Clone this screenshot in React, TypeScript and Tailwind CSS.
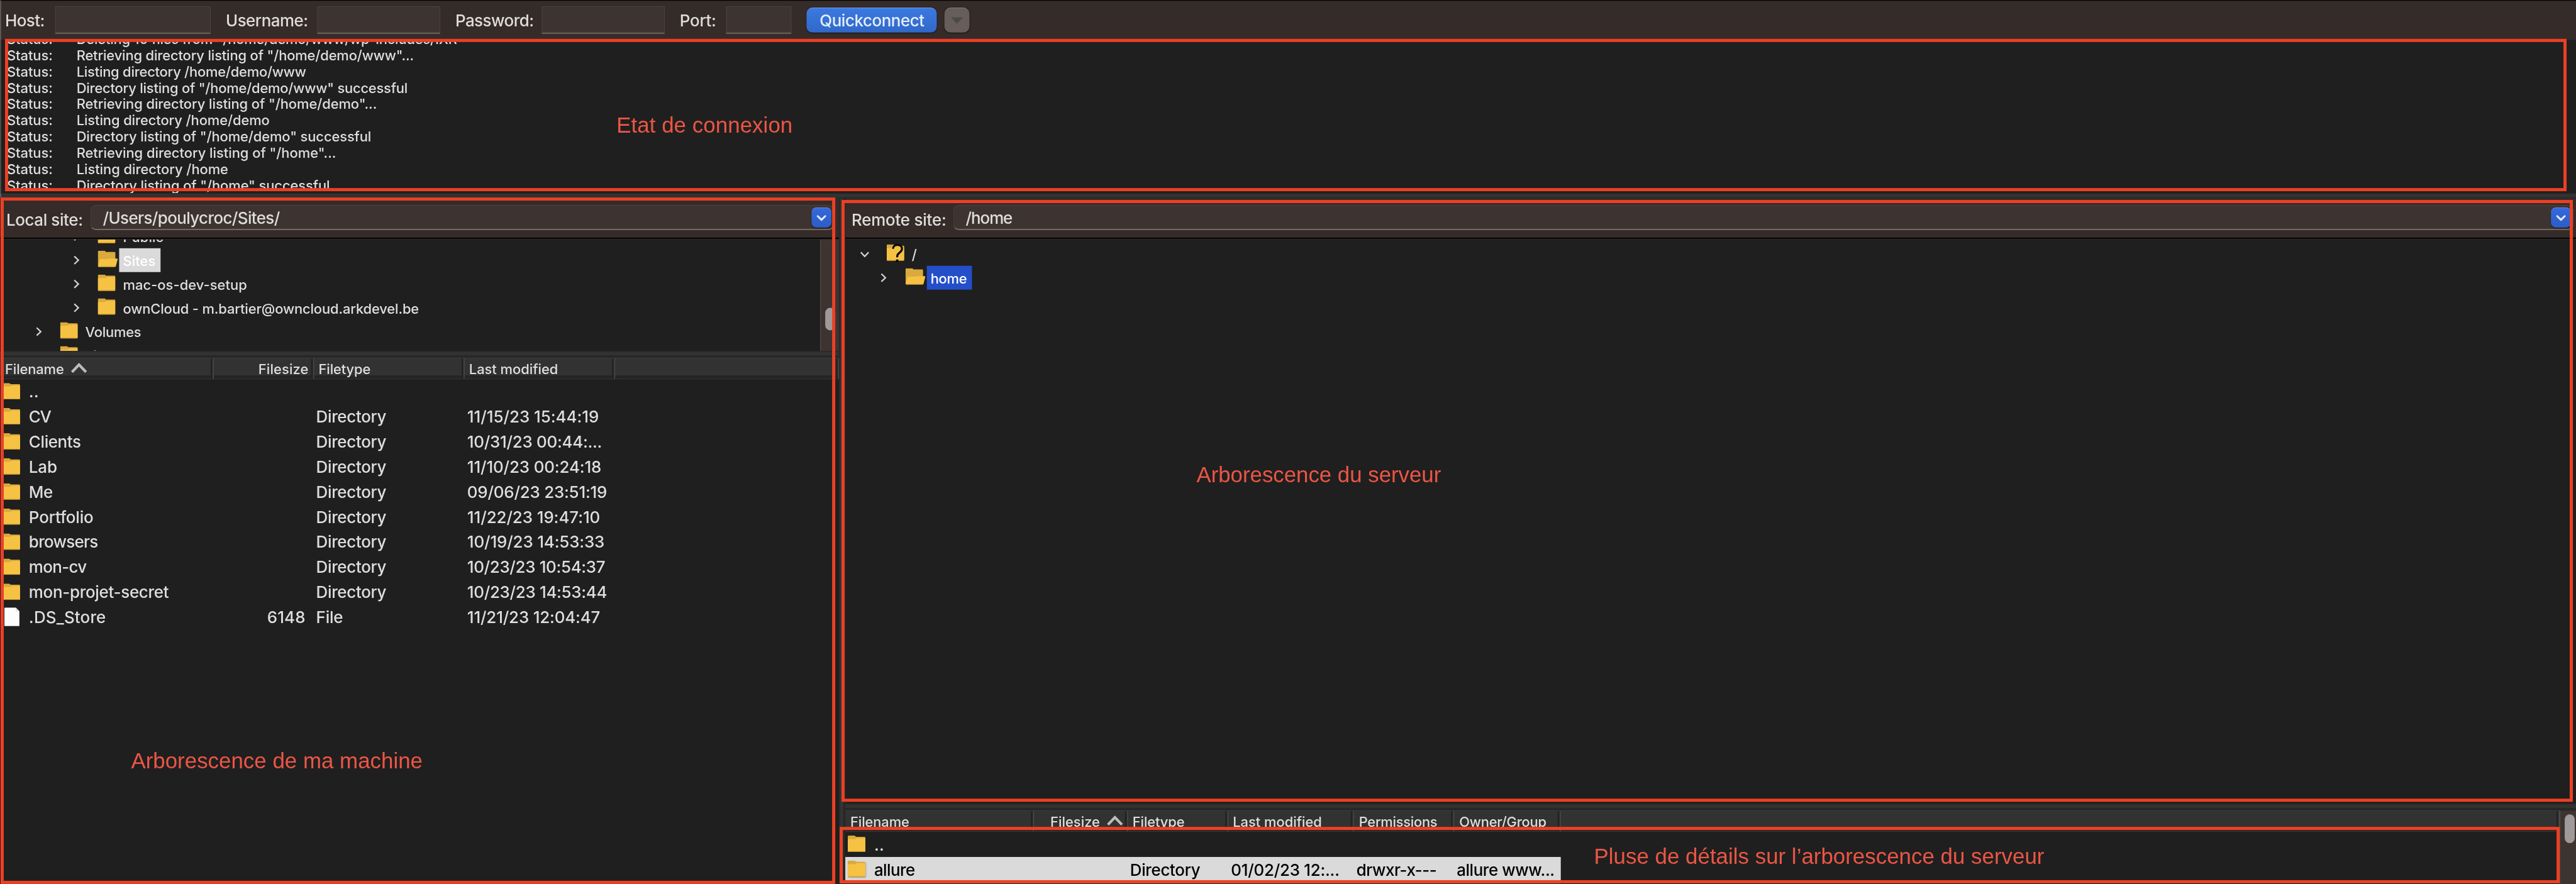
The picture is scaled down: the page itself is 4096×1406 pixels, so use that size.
import React, { useLayoutEffect, useRef, useState } from "react";

const SCALE = 4096 / 4108;

/** Text whose tracking is tuned so that it occupies an exact advance width. */
function Fit({ w, className = "", children }: { w: number; className?: string; children: string }) {
  const ref = useRef<HTMLSpanElement>(null);
  const [spacing, setSpacing] = useState(0);
  useLayoutEffect(() => {
    if (!ref.current) return;
    const natural = ref.current.getBoundingClientRect().width / SCALE;
    setSpacing((w - natural) / children.length);
  }, []);
  return (
    <span
      ref={ref}
      className={`inline-block shrink-0 pl-[1px] whitespace-pre ${className}`}
      style={{ letterSpacing: `${spacing}px` }}
    >
      {children}
    </span>
  );
}

function Folder({ className = "" }: { className?: string }) {
  return (
    <svg viewBox="0 0 28 26" className={`h-[26px] w-[28px] shrink-0 ${className}`}>
      <path d="M0 1.5Q0 0 1.5 0H10.5Q12 0 12.7 1.8H26.5Q28 1.8 28 3.3V24.5Q28 26 26.5 26H1.5Q0 26 0 24.5Z" fill="#dba93c" />
      <path d="M0 6.6Q0 5.6 1 5.6H11.5Q12.6 5.6 13.4 4.6T15.5 3.8H27Q28 3.8 28 4.8V24.5Q28 25.8 26.5 25.8H1.5Q0 25.8 0 24.5Z" fill="#f6c244" />
      <path d="M0.6 25.4H27.4" stroke="#c4962f" strokeWidth="1" />
    </svg>
  );
}

function OpenFolder({ className = "" }: { className?: string }) {
  return (
    <svg viewBox="0 0 32 26" className={`h-[26px] w-[32px] shrink-0 ${className}`}>
      <path d="M0 1.5Q0 0 1.5 0H10.5Q12 0 12.7 1.8H26.5Q28 1.8 28 3.3V24.5H0Z" fill="#dba93c" />
      <path d="M3.4 14.3Q3.7 13.2 4.8 13.2H14.5Q16 13 16.8 12.5H30.6Q31.9 12.5 31.6 13.6L28.8 24.6Q28.4 26 27 26H1.6Q0 26 0.3 24.4Z" fill="#f6c244" />
      <path d="M1 25.5H27.6" stroke="#c4962f" strokeWidth="1" />
    </svg>
  );
}

function UnknownFolder() {
  return (
    <span className="relative mt-[4px] block h-[26px] w-[28px] shrink-0">
      <Folder />
      <svg viewBox="0 0 20 32" className="absolute -top-[2px] left-[8px] h-[32px] w-[20px]">
        <path d="M2.2 8.8C2.2 5 4.8 2.6 9.2 2.6C13.6 2.6 16.4 5 16.4 8.8C16.4 11.4 15.2 13 12.8 14.8C10 16.8 8.8 18 8.8 20.8V22.4" fill="none" stroke="#0a0a0a" strokeWidth="3.2" />
        <circle cx="8.8" cy="28" r="2.3" fill="#0a0a0a" />
      </svg>
    </span>
  );
}

function FileIcon({ className = "" }: { className?: string }) {
  return (
    <svg viewBox="0 0 24 30" className={`h-[30px] w-[24px] shrink-0 ${className}`}>
      <path d="M0 1.5Q0 0 1.5 0H18L24 6V28.5Q24 30 22.5 30H1.5Q0 30 0 28.5Z" fill="#fdfdfd" />
      <path d="M18 0L24 6H20Q18 6 18 4Z" fill="#e2e2e2" />
      <path d="M0.5 29.5H23.5" stroke="#b8b8b8" strokeWidth="1" />
    </svg>
  );
}

function ChevronRight({ className = "" }: { className?: string }) {
  return (
    <svg viewBox="0 0 10 16" className={`h-[16px] w-[10px] shrink-0 ${className}`}>
      <path d="M1.5 1.8L8 8L1.5 14.2" fill="none" stroke="#d2d2d2" strokeWidth="2.3" />
    </svg>
  );
}

function ChevronDown({ className = "" }: { className?: string }) {
  return (
    <svg viewBox="0 0 16 10" className={`h-[10px] w-[16px] shrink-0 ${className}`}>
      <path d="M1.8 1.5L8 8L14.2 1.5" fill="none" stroke="#d2d2d2" strokeWidth="2.3" />
    </svg>
  );
}

function SortCaret({ className = "" }: { className?: string }) {
  return (
    <svg viewBox="0 0 26 16" className={`h-[16px] w-[26px] shrink-0 ${className}`}>
      <path d="M1.8 14.5L13 2.8L24.2 14.5" fill="none" stroke="#bcbcbc" strokeWidth="4.2" />
    </svg>
  );
}

function Field({ className = "" }: { className?: string }) {
  return (
    <div className={`h-[44px] shrink-0 border border-b-2 border-[#4c4341] border-b-[#6d6462] bg-[#3d3431] ${className}`} />
  );
}

function ConnectBar() {
  return (
    <header className="flex h-[64px] border-t border-black bg-[#352b29] text-[26px] text-[#dfdcdb]">
      <div className="flex h-full w-full items-start border-t border-[#2a2524] pt-[8px]">
        <Fit w={64} className="ml-[7px] leading-[45px]">Host:</Fit>
        <Field className="ml-[17px] w-[248px]" />
        <Fit w={132} className="ml-[23px] leading-[45px]">Username:</Fit>
        <Field className="ml-[15px] w-[196px]" />
        <Fit w={126} className="ml-[23px] leading-[45px]">Password:</Fit>
        <Field className="ml-[13px] w-[196px]" />
        <Fit w={59} className="ml-[23px] leading-[45px]">Port:</Fit>
        <Field className="ml-[16px] w-[104px]" />
        <button className="mt-[2px] ml-[24px] h-[40px] w-[208px] rounded-[10px] border-t border-[#6d9ceb] bg-linear-to-b from-[#3b79e0] to-[#3068c8] text-center text-[#e6eefb] shadow-[0_1px_2px_rgba(0,0,0,0.5)]">
          <Fit w={168} className="leading-[37px]">Quickconnect</Fit>
        </button>
        <button className="mt-[2px] ml-[12px] flex h-[40px] w-[40px] justify-center rounded-[10px] border-t border-[#857b79] bg-[#675d5b] pt-[14px] shadow-[0_1px_2px_rgba(0,0,0,0.5)]">
          <svg viewBox="0 0 20 11" className="h-[11px] w-[20px]">
            <path d="M0.5 0.5H19.5L10 10.8Z" fill="#4b4a47" />
          </svg>
        </button>
      </div>
    </header>
  );
}

const LOG: [string, number][] = [
  ['Deleting 10 files from "/home/demo/www/wp-includes/IXR', 608],
  ['Retrieving directory listing of "/home/demo/www"...', 539],
  ["Listing directory /home/demo/www", 367],
  ['Directory listing of "/home/demo/www" successful', 529],
  ['Retrieving directory listing of "/home/demo"...', 480],
  ["Listing directory /home/demo", 309],
  ['Directory listing of "/home/demo" successful', 471],
  ['Retrieving directory listing of "/home"...', 415],
  ["Listing directory /home", 243],
  ['Directory listing of "/home" successful', 405],
];

function MessageLog() {
  return (
    <section className="h-[244px] shrink-0 overflow-hidden bg-[#1f1f1f] text-[22px] leading-[26px] text-[#dedede]">
      <div className="-mt-[15px]">
        {LOG.map(([text, w]) => (
          <div key={text} className="flex h-[26px]">
            <div className="w-[111px] pl-[10px]">
              <Fit w={74}>Status:</Fit>
            </div>
            <div className="pl-[10px]">
              <Fit w={w}>{text}</Fit>
            </div>
          </div>
        ))}
      </div>
    </section>
  );
}

function SiteBar({ label, labelWidth, path, pathWidth, labelPad, comboClass }: {
  label: string; labelWidth: number; path: string; pathWidth: number; labelPad: string; comboClass: string;
}) {
  return (
    <div className="flex h-[65px] shrink-0 border-b-2 border-black bg-[#352b29] text-[26px] text-[#dfdcdb]">
      <Fit w={labelWidth} className={`mt-[13px] leading-[43px] ${labelPad}`}>{label}</Fit>
      <div className={`mt-[11px] flex h-[40px] justify-between rounded-[9px] border border-b-2 border-[#4c4341] border-b-[#746a68] bg-[#3d3431] pr-[3px] ${comboClass}`}>
        <Fit w={pathWidth} className="ml-[18px] leading-[40px]">{path}</Fit>
        <span className="mt-[3px] flex h-[32px] w-[32px] items-center justify-center rounded-[8px] border-t border-[#6590ee] bg-linear-to-b from-[#3469dc] to-[#2c5cc6] shadow-[0_1px_2px_rgba(0,0,0,0.6)]">
          <svg viewBox="0 0 16 10" className="h-[10px] w-[16px]">
            <path d="M2 1.8L8 7.6L14 1.8" fill="none" stroke="#e4ebfa" strokeWidth="3" strokeLinecap="round" strokeLinejoin="round" />
          </svg>
        </span>
      </div>
    </div>
  );
}

function Splitter() {
  return <div className="h-[11px] shrink-0 border-t border-b-4 border-[#262626] border-b-[#272727] bg-[#323232]" />;
}

type Node = { name: string; w: number; indent: string; open?: boolean; arrow?: boolean };

const LOCAL_TREE: Node[] = [
  { name: "Public", w: 66, indent: "pl-[117px]", arrow: true },
  { name: "Sites", w: 53, indent: "pl-[117px]", open: true, arrow: true },
  { name: "mac-os-dev-setup", w: 199, indent: "pl-[117px]", arrow: true },
  { name: "ownCloud - m.bartier@owncloud.arkdevel.be", w: 473, indent: "pl-[117px]", arrow: true },
  { name: "Volumes", w: 90, indent: "pl-[57px]", arrow: true },
  { name: "bin", w: 31, indent: "pl-[57px]", arrow: false },
];

function LocalTree() {
  return (
    <div className="flex h-[179px] shrink-0 overflow-hidden border-t border-[#2b2b2b] bg-[#1f1f1f] text-[22px] text-[#dedede]">
      <div className="-mt-[24px] grow">
        {LOCAL_TREE.map((n) => (
          <div key={n.name} className={`flex h-[38px] ${n.indent}`}>
            <ChevronRight className={n.arrow ? "mt-[11px]" : "invisible mt-[11px]"} />
            {n.open ? <OpenFolder className="mt-[4px] ml-[29px]" /> : <Folder className="mt-[4px] mr-[4px] ml-[29px]" />}
            <span className={n.open ? "ml-[2px] w-[66px] bg-[#dadada] pl-[5px] text-white" : "ml-[2px] pl-[5px]"}>
              <Fit w={n.w} className="leading-[40px]">{n.name}</Fit>
            </span>
          </div>
        ))}
      </div>
      <div className="w-[30px] border-l border-[#574e4b] bg-[#3d3431] pt-[109px] pl-[7px]">
        <div className="h-[36px] w-[16px] rounded-full bg-[#a09999]" />
      </div>
    </div>
  );
}

function HeadCell({ label, w, width, align = "justify-start pl-[6px]", sort }: {
  label?: string; w?: number; width: string; align?: string; sort?: boolean;
}) {
  return (
    <div className={`flex h-full items-start border-r-2 border-[#464646] ${width}`}>
      <div className={`flex h-full min-w-0 grow ${align}`}>
        {label && <Fit w={w ?? 0} className="leading-[35px]">{label}</Fit>}
        {sort && <SortCaret className="mt-[7px] ml-[11px]" />}
      </div>
      <div className="-ml-[3px] h-full w-[3px] bg-[#232323]" />
    </div>
  );
}

function TableHead({ children }: { children: React.ReactNode }) {
  return (
    <div className="flex h-[34px] shrink-0 border-t border-b border-t-[#474747] border-b-[#3a3a3a] bg-linear-to-b from-[#323232] from-85% to-[#252525] to-85% text-[22px] text-[#dedede]">
      {children}
    </div>
  );
}

type FileRow = { name: string; w: number; size?: string; type?: string; tw?: number; date?: string; dw?: number };

const LOCAL_FILES: FileRow[] = [
  { name: "..", w: 17 },
  { name: "CV", w: 36, type: "Directory", date: "11/15/23 15:44:19", dw: 211 },
  { name: "Clients", w: 84, type: "Directory", date: "10/31/23 00:44:...", dw: 216 },
  { name: "Lab", w: 46, type: "Directory", date: "11/10/23 00:24:18", dw: 215 },
  { name: "Me", w: 39, type: "Directory", date: "09/06/23 23:51:19", dw: 224 },
  { name: "Portfolio", w: 104, type: "Directory", date: "11/22/23 19:47:10", dw: 213 },
  { name: "browsers", w: 111, type: "Directory", date: "10/19/23 14:53:33", dw: 220 },
  { name: "mon-cv", w: 93, type: "Directory", date: "10/23/23 10:54:37", dw: 221 },
  { name: "mon-projet-secret", w: 224, type: "Directory", date: "10/23/23 14:53:44", dw: 224 },
  { name: ".DS_Store", w: 124, size: "6148", type: "File", tw: 44, date: "11/21/23 12:04:47", dw: 213 },
];

function LocalPanel() {
  return (
    <section className="flex w-[1338px] shrink-0 flex-col bg-[#1f1f1f]">
      <SiteBar label="Local site:" labelWidth={123} labelPad="ml-[9px]" path="/Users/poulycroc/Sites/" pathWidth={283} comboClass="ml-[12px] w-[1186px]" />
      <LocalTree />
      <Splitter />
      <TableHead>
        <HeadCell label="Filename" w={95} width="w-[341px]" align="pl-[7px]" sort />
        <HeadCell label="Filesize" w={81} width="w-[160px]" align="justify-end pr-[7px]" />
        <HeadCell label="Filetype" w={84} width="w-[240px]" />
        <HeadCell label="Last modified" w={143} width="w-[240px]" />
        <HeadCell width="w-[357px]" />
      </TableHead>
      <div className="text-[26px] leading-[40px] text-[#dedede]">
        {LOCAL_FILES.map((f) => (
          <div key={f.name} className="flex h-[40px]">
            <div className="flex w-[341px] pl-[4px]">
              {f.size ? <FileIcon className="mt-[4px] mr-px ml-[3px]" /> : <Folder className="mt-[6px]" />}
              <Fit w={f.w} className="ml-[13px]">{f.name}</Fit>
            </div>
            <div className="flex w-[160px] justify-end pr-[14px]">
              {f.size && <Fit w={62}>{f.size}</Fit>}
            </div>
            <div className="w-[240px] pl-[2px]">{f.type && <Fit w={f.tw ?? 113}>{f.type}</Fit>}</div>
            <div className="w-[240px] pl-[3px]">{f.date && <Fit w={f.dw ?? 0}>{f.date}</Fit>}</div>
          </div>
        ))}
      </div>
    </section>
  );
}

function RemotePanel() {
  return (
    <section className="flex min-w-0 grow flex-col bg-[#1f1f1f]">
      <SiteBar label="Remote site:" labelWidth={152} labelPad="ml-[9px]" path="/home" pathWidth={75} comboClass="ml-[11px] w-[2584px]" />
      <div className="h-[901px] shrink-0 border-t border-[#2b2b2b] pt-[4px] text-[22px] text-[#dedede]">
        <div className="flex h-[38px] pl-[23px]">
          <ChevronDown className="mt-[15px] mr-[27px]" />
          <UnknownFolder />
          <Fit w={9} className="ml-[11px] leading-[40px]">/</Fit>
        </div>
        <div className="flex h-[38px] pl-[56px]">
          <ChevronRight className="mt-[11px]" />
          <OpenFolder className="mt-[4px] ml-[30px]" />
          <span className="ml-[2px] w-[72px] bg-[#244fc9] pl-[5px] text-white">
            <Fit w={59} className="leading-[40px]">home</Fit>
          </span>
        </div>
      </div>
      <Splitter />
      <div className="flex grow">
        <div className="w-[2734px] shrink-0">
          <TableHead>
            <HeadCell label="Filename" w={95} width="w-[301px]" align="pl-[7px]" />
            <HeadCell label="Filesize" w={80} width="w-[150px]" align="justify-end pr-[6px]" sort />
            <HeadCell label="Filetype" w={84} width="w-[160px]" />
            <HeadCell label="Last modified" w={143} width="w-[200px]" />
            <HeadCell label="Permissions" w={126} width="w-[160px]" align="pl-[7px]" />
            <HeadCell label="Owner/Group" w={140} width="w-[170px]" align="pl-[7px]" />
            <HeadCell width="w-[1593px]" />
          </TableHead>
          <div className="text-[26px] leading-[41px]">
            <div className="flex h-[40px] pl-[4px] text-[#dedede]">
              <Folder className="mt-[6px]" />
              <Fit w={17} className="ml-[13px]">..</Fit>
            </div>
            <div className="flex h-[42px] w-[1141px] bg-[#dadada] text-black">
              <div className="flex w-[301px] pl-[4px]">
                <Folder className="mt-[6px] drop-shadow-[1px_1px_1px_rgba(0,0,0,0.25)]" />
                <Fit w={66} className="ml-[13px]">allure</Fit>
              </div>
              <div className="w-[150px]" />
              <div className="w-[160px] pl-[2px]"><Fit w={113}>Directory</Fit></div>
              <div className="w-[200px] pl-[3px]"><Fit w={174}>01/02/23 12:...</Fit></div>
              <div className="w-[160px] pl-[3px]"><Fit w={129}>drwxr-x---</Fit></div>
              <div className="w-[170px] pl-[3px]"><Fit w={157}>allure www...</Fit></div>
            </div>
          </div>
        </div>
        <div className="grow border-l border-[#574e4b] bg-[#3d3431] pt-[6px] pl-[7px]">
          <div className="h-[46px] w-[16px] rounded-full bg-[#a09999]" />
        </div>
      </div>
    </section>
  );
}

const FRAME = "pointer-events-none absolute border-[5px] border-[#ec4025]";
const NOTE = "pointer-events-none absolute font-['Liberation_Sans',sans-serif] text-[35px] leading-[40px] font-normal text-[#ec5645]";

function Annotations() {
  return (
    <>
      <div className={`${FRAME} top-[62px] left-[8px] h-[243px] w-[4085px]`} />
      <div className={`${FRAME} top-[315px] left-[1px] h-[1095px] w-[1331px]`} />
      <div className={`${FRAME} top-[319px] left-[1342px] h-[960px] w-[2761px]`} />
      <div className={`${FRAME} top-[1319px] left-[1339px] h-[90px] w-[2743px]`} />
      <div className={`${NOTE} top-[180px] left-[982px]`}><Fit w={282}>Etat de connexion</Fit></div>
      <div className={`${NOTE} top-[1194px] left-[208px]`}><Fit w={466}>Arborescence de ma machine</Fit></div>
      <div className={`${NOTE} top-[737px] left-[1907px]`}><Fit w={391}>Arborescence du serveur</Fit></div>
      <div className={`${NOTE} top-[1346px] left-[2541px]`}><Fit w={719}>Pluse de détails sur l’arborescence du serveur</Fit></div>
    </>
  );
}

export default function App() {
  return (
    <div className="h-[1406px] w-[4096px] overflow-hidden bg-[#1f1f1f]">
      <div
        className="relative flex h-[1410px] w-[4108px] origin-top-left flex-col overflow-hidden bg-[#1f1f1f] font-['Inter',sans-serif] font-[450]"
        style={{ transform: `scale(${SCALE})` }}
      >
        <ConnectBar />
        <MessageLog />
        <div className="h-[8px] shrink-0 border-t border-b border-[#262626] bg-[#323232]" />
        <main className="flex h-[1094px] shrink-0">
          <LocalPanel />
          <div className="w-[10px] shrink-0 border-r-[3px] border-l border-[#262626] bg-[#323232]" />
          <RemotePanel />
        </main>
        <div className="absolute top-0 left-0 h-[315px] w-[2px] bg-white/20" />
        <Annotations />
      </div>
    </div>
  );
}
